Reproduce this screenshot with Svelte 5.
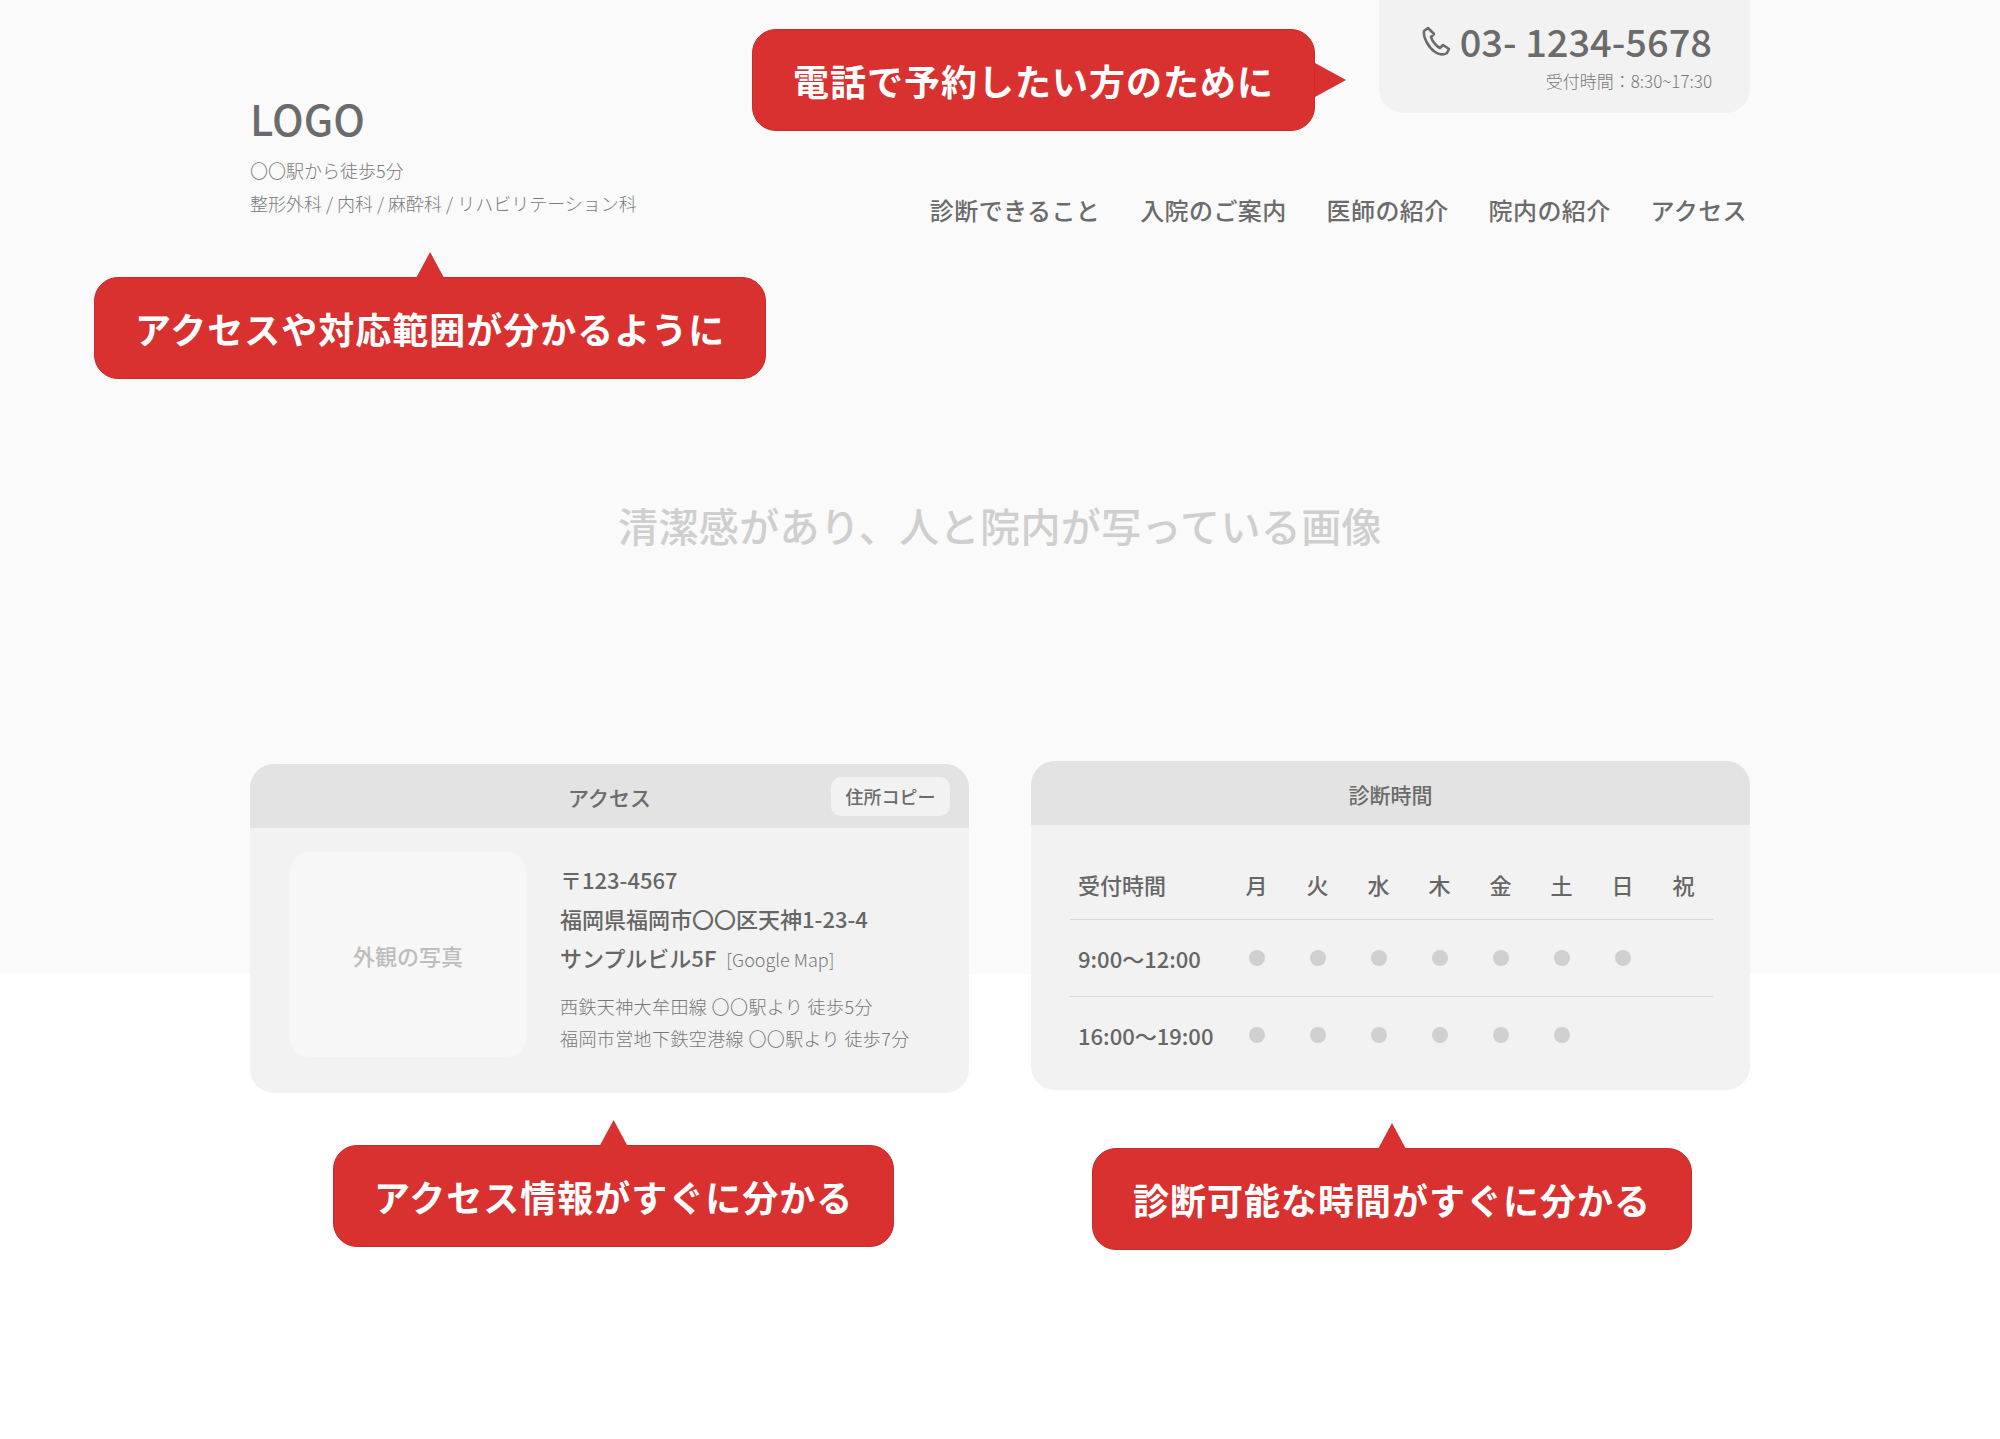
<script>
  const days = ['月', '火', '水', '木', '金', '土', '日', '祝'];
  const rows = [
    { label: '9:00〜12:00', open: 7 },
    { label: '16:00〜19:00', open: 6 },
  ];
  const navItems = ['診断できること', '入院のご案内', '医師の紹介', '院内の紹介', 'アクセス'];
</script>

<div class="page">
  <section class="hero">
    <div class="inner">
      <header class="header">
        <div class="brand">
          <div class="logo">LOGO</div>
          <p>〇〇駅から徒歩5分</p>
          <p>整形外科 / 内科 / 麻酔科 / リハビリテーション科</p>
          <div class="callout tail-top access-note">アクセスや対応範囲が分かるように</div>
        </div>
        <div class="header-right">
          <div class="callout tail-right phone-note">電話で予約したい方のために</div>
          <div class="phone">
            <div class="phone-number">
              <svg width="32" height="32" viewBox="0 0 32 32" fill="none" stroke="#6b6b6b" stroke-width="2.6" stroke-linejoin="round">
                <path d="M8 3 L4 6 C3 12 8 22 15 27 C19 30 24 30 27 28 L29 24 L23 20 L20 23 C17 22 12 16 11 12 L14 9 Z" />
              </svg>
              <span>03- 1234-5678</span>
            </div>
            <div class="phone-hours">受付時間：8:30~17:30</div>
          </div>
          <nav class="nav">
            {#each navItems as item}
              <span>{item}</span>
            {/each}
          </nav>
        </div>
      </header>
      <p class="hero-text">清潔感があり、人と院内が写っている画像</p>
    </div>
  </section>

  <section class="cards inner">
    <div class="column access-column">
      <div class="card">
        <div class="card-head">
          アクセス
          <span class="copy">住所コピー</span>
        </div>
        <div class="access-body">
          <div class="photo">外観の写真</div>
          <div class="info">
            <div class="address">
              <div>〒123-4567</div>
              <div>福岡県福岡市〇〇区天神1-23-4</div>
              <div>サンプルビル5F<span class="map">[Google Map]</span></div>
            </div>
            <div class="lines">
              <div>西鉄天神大牟田線 〇〇駅より 徒歩5分</div>
              <div>福岡市営地下鉄空港線 〇〇駅より 徒歩7分</div>
            </div>
          </div>
        </div>
      </div>
      <div class="callout tail-top note-access">アクセス情報がすぐに分かる</div>
    </div>

    <div class="column">
      <div class="card">
        <div class="card-head">診断時間</div>
        <div class="hours-body">
          <div class="hours-row head">
            <div class="label">受付時間</div>
            {#each days as day}
              <div class="cell">{day}</div>
            {/each}
          </div>
          {#each rows as row}
            <div class="hours-row">
              <div class="label">{row.label}</div>
              {#each days as day, i}
                <div class="cell">
                  {#if i < row.open}<span class="dot"></span>{/if}
                </div>
              {/each}
            </div>
          {/each}
        </div>
      </div>
      <div class="callout tail-top note-hours">診断可能な時間がすぐに分かる</div>
    </div>
  </section>
</div>

<style>
  :global(body) {
    margin: 0;
    background: #fff;
  }

  .page {
    height: 1439px;
    overflow: hidden;
    font-family: "Noto Sans CJK JP", "Noto Sans", sans-serif;
    color: #666;
  }

  .hero {
    height: 974px;
    background: #fafafa;
  }

  .inner {
    width: 1500px;
    margin: 0 auto;
  }

  .header {
    display: flex;
    justify-content: space-between;
    align-items: flex-start;
  }

  .brand {
    position: relative;
    padding-top: 90px;
    font-size: 18px;
    line-height: 33px;
    color: #7a7a7a;
    font-weight: 300;
  }

  .brand p {
    margin: 0;
  }

  .logo {
    font-size: 42px;
    line-height: 56px;
    font-weight: 500;
    color: #6b6b6b;
    margin-bottom: 8px;
  }

  .header-right {
    position: relative;
    display: flex;
    flex-direction: column;
    align-items: flex-end;
  }

  .phone {
    box-sizing: border-box;
    width: 371px;
    height: 113px;
    padding: 16px 38px 0 0;
    background: #f2f2f2;
    border-radius: 0 0 24px 24px;
    text-align: right;
  }

  .phone-number {
    display: flex;
    justify-content: flex-end;
    align-items: center;
    gap: 8px;
    font-size: 38px;
    line-height: 50px;
    font-weight: 500;
    color: #6b6b6b;
  }

  .phone-hours {
    font-size: 17px;
    line-height: 30px;
    font-weight: 300;
    color: #777;
  }

  .nav {
    display: flex;
    gap: 40px;
    margin-top: 80px;
    margin-right: 3px;
    font-size: 24px;
    line-height: 34px;
    font-weight: 500;
    letter-spacing: 0.4px;
    color: #6b6b6b;
  }

  .hero-text {
    margin: 270px 0 0;
    text-align: center;
    font-size: 40px;
    line-height: 56px;
    font-weight: 500;
    letter-spacing: 0.4px;
    color: #cfcfcf;
  }

  .cards {
    display: grid;
    grid-template-columns: 719px 719px;
    gap: 62px;
    margin-top: -213px;
  }

  .column {
    position: relative;
    height: 490px;
  }

  .access-column {
    padding-top: 3px;
  }

  .card {
    background: #f2f2f2;
    border-radius: 24px;
    overflow: hidden;
    height: 329px;
  }

  .card-head {
    position: relative;
    height: 64px;
    background: #e3e3e3;
    text-align: center;
    font-size: 21px;
    line-height: 66px;
    font-weight: 500;
    color: #6b6b6b;
  }

  .copy {
    position: absolute;
    top: 13px;
    right: 19px;
    width: 119px;
    height: 39px;
    background: #f2f2f2;
    border-radius: 10px;
    font-size: 18px;
    line-height: 39px;
  }

  .access-body {
    display: flex;
    gap: 34px;
    padding: 24px 40px 0;
  }

  .photo {
    flex: none;
    display: flex;
    align-items: center;
    justify-content: center;
    width: 236px;
    height: 205px;
    background: #f7f7f7;
    border-radius: 20px;
    font-size: 22px;
    font-weight: 500;
    color: #bdbdbd;
  }

  .info {
    padding-top: 8px;
  }

  .address {
    font-size: 22px;
    line-height: 39px;
    font-weight: 500;
    color: #666;
  }

  .map {
    margin-left: 10px;
    font-size: 18px;
    font-weight: 300;
    color: #777;
  }

  .lines {
    margin-top: 11px;
    font-size: 18px;
    line-height: 32px;
    font-weight: 300;
    color: #777;
    letter-spacing: 0.4px;
  }

  .hours-body {
    padding: 24px 37px 0 39px;
  }

  .hours-row {
    display: grid;
    grid-template-columns: 156px repeat(8, 61px);
    align-items: center;
    height: 76px;
    border-top: 1px solid #d8d8d8;
    font-size: 22px;
    font-weight: 500;
    color: #666;
  }

  .hours-row.head {
    height: 70px;
    border-top: 0;
  }

  .label {
    padding-left: 8px;
    white-space: nowrap;
  }

  .cell {
    display: flex;
    justify-content: center;
    align-items: center;
  }

  .dot {
    width: 16px;
    height: 16px;
    border-radius: 50%;
    background: #d0d0d0;
  }

  .callout {
    position: absolute;
    box-sizing: border-box;
    height: 102px;
    padding: 0 40px;
    background: #d93030;
    border: 1px solid #c92a2a;
    border-radius: 24px;
    color: #fff;
    font-size: 36px;
    line-height: 100px;
    font-weight: 700;
    letter-spacing: 1px;
    white-space: nowrap;
  }

  .callout::before {
    content: '';
    position: absolute;
    background: #d93030;
  }

  .tail-top::before {
    top: -26px;
    left: calc(50% - 14px);
    width: 28px;
    height: 26px;
    clip-path: polygon(50% 0, 100% 100%, 0 100%);
  }

  .tail-right::before {
    top: 33px;
    right: -32px;
    width: 31px;
    height: 34px;
    clip-path: polygon(0 0, 100% 50%, 0 100%);
  }

  .access-note {
    top: 277px;
    left: -156px;
  }

  .phone-note {
    top: 29px;
    right: 435px;
  }

  .note-access {
    top: 384px;
    left: 83px;
  }

  .note-hours {
    top: 387px;
    left: 61px;
  }
</style>
